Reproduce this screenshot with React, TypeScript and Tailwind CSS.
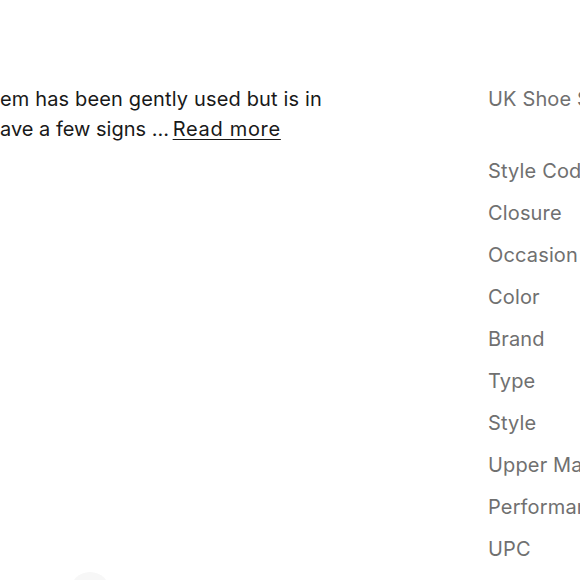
const specs = [
  'Style Code',
  'Closure',
  'Occasion',
  'Color',
  'Brand',
  'Type',
  'Style',
  'Upper Material',
  'Performance/Activity',
  'UPC',
];

export default function App() {
  return (
    <div className="w-[580px] h-[580px] overflow-hidden bg-white font-['Inter',sans-serif] text-[20px] leading-[30px] tracking-[0.15px] whitespace-nowrap">
      <div className="flex pt-[84px]">
        {/* Left - condition text */}
        <div className="w-[488px] shrink-0 flex flex-col text-[#191919]">
          <p>em has been gently used but is in</p>
          <p className="tracking-normal">
            ave a few signs <span className="tracking-[-1px]">… </span>
            <a href="#" className="underline underline-offset-[3px] decoration-1 tracking-[0.7px]">
              Read more
            </a>
          </p>
          <div className="mt-[428px] ml-[70px] w-10 h-10 rounded-full bg-[#f7f7f7]" />
        </div>

        {/* Right - item specifics labels */}
        <div className="flex flex-col text-[#707070]">
          <span>UK Shoe Size</span>
          <div className="mt-[42px] flex flex-col gap-[12px]">
            {specs.map((s) => (
              <span key={s}>{s}</span>
            ))}
          </div>
        </div>
      </div>
    </div>
  );
}
